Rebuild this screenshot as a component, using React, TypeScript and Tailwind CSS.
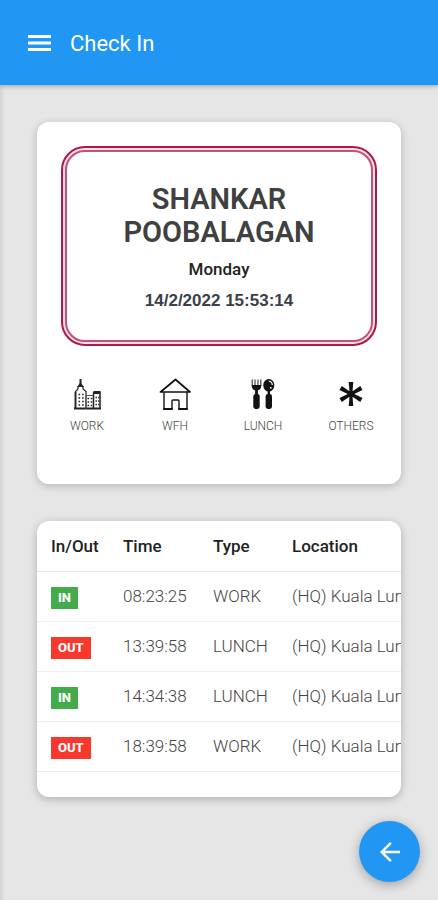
import { MdArrowBack } from 'react-icons/md'

const MenuIcon = () => (
  <svg className="h-[30px] w-[30px]" viewBox="0 0 30 30" fill="currentColor" aria-hidden="true">
    <path d="M4 7h23v3H4zM4 13.500h23v3H4zM4 20h23v3H4z" />
  </svg>
)

const WorkIcon = () => (
  <svg className="h-8 w-8" viewBox="0 0 32 32" fill="none" stroke="#222" aria-hidden="true">
    <path d="M9.500 1v7" strokeWidth="2" />
    <path d="M7 9l2.500-3.500L12 9" strokeWidth="1.500" />
    <path d="M4.500 31V13.500L7 11V8.500h5V11l3 2.500V31" strokeWidth="1.200" />
    <path d="M4.500 14v17M3 30.500h27" strokeWidth="1.800" />
    <path d="M15 17.500h7M15 31V17.500" stroke="#555" />
    <path d="M22.500 31V15l2-1h4.500v17" strokeWidth="1.500" />
    <path d="M22.500 14.500h6.500" strokeWidth="3" />
    <path d="M7.500 16.500h6M7.500 20h6M7.500 23.500h6M7.500 27h6" strokeWidth="1.600" strokeDasharray="1.600 2" />
    <path d="M16.500 20.500h5M16.500 24h5M16.500 27.500h5" strokeWidth="1.600" strokeDasharray="1.600 1.600" />
    <path d="M24.500 19.500h4M24.500 23h4M24.500 26.500h4" strokeWidth="1.600" strokeDasharray="1.400 1.200" />
  </svg>
)

const HomeIcon = () => (
  <svg className="h-8 w-8" viewBox="0 0 32 32" fill="none" stroke="#111" strokeLinejoin="round" strokeLinecap="round" aria-hidden="true">
    <path d="M1.500 14L16.500 1.500 31 14z" strokeWidth="1.700" />
    <path d="M5 14.500V31h8v-8q0-1 1-1h5q1 0 1 1v8h8V14.500" strokeWidth="1.400" />
    <path d="M5 31h8M20 31h8" strokeWidth="2" />
  </svg>
)

const LunchIcon = () => (
  <svg className="h-8 w-8" viewBox="0 0 32 32" fill="#111" aria-hidden="true">
    <path d="M5.200 1.500v6h8.600v-6M8 1.500v6M11 1.500v6" fill="none" stroke="#333" strokeWidth="1.100" />
    <path d="M4.700 7h9.600q0 4.500-3.400 5.500v4H8.100v-4Q4.700 11.500 4.700 7z" />
    <rect x="6.300" y="16" width="6.400" height="15" rx="2.400" />
    <ellipse cx="21.800" cy="7.200" rx="5.500" ry="6.300" />
    <path d="M20.600 12.500h2.400v6h-2.400z" />
    <rect x="18.600" y="16" width="6.400" height="15" rx="2.400" />
    <path d="M21.800 3q3.300.5 3.500 4" fill="none" stroke="#fff" strokeWidth="1.200" />
    <circle cx="23.800" cy="9.800" r=".9" fill="#fff" />
  </svg>
)

const OthersIcon = () => (
  <svg className="h-8 w-8" viewBox="0 0 32 32" fill="#111" aria-hidden="true">
    <path d="M13.700 4h4.600l-1 12h-2.600z" />
    <path d="M13.700 4h4.600l-1 12h-2.600z" transform="rotate(60 16 16)" />
    <path d="M13.700 4h4.600l-1 12h-2.600z" transform="rotate(120 16 16)" />
    <path d="M13.700 4h4.600l-1 12h-2.600z" transform="rotate(180 16 16)" />
    <path d="M13.700 4h4.600l-1 12h-2.600z" transform="rotate(240 16 16)" />
    <path d="M13.700 4h4.600l-1 12h-2.600z" transform="rotate(300 16 16)" />
    <circle cx="16" cy="16" r="3.200" />
  </svg>
)

const actions = [
  { label: 'WORK', Icon: WorkIcon },
  { label: 'WFH', Icon: HomeIcon },
  { label: 'LUNCH', Icon: LunchIcon },
  { label: 'OTHERS', Icon: OthersIcon },
]

const records = [
  { status: 'IN', time: '08:23:25', type: 'WORK', location: '(HQ) Kuala Lumpur' },
  { status: 'OUT', time: '13:39:58', type: 'LUNCH', location: '(HQ) Kuala Lumpur' },
  { status: 'IN', time: '14:34:38', type: 'LUNCH', location: '(HQ) Kuala Lumpur' },
  { status: 'OUT', time: '18:39:58', type: 'WORK', location: '(HQ) Kuala Lumpur' },
]

const Header = () => (
  <header className="flex h-[85px] items-center gap-4 bg-[#2196f3] px-6 pt-px text-white shadow-[0_1px_5px_rgba(0,0,0,0.3)]">
    <button type="button" aria-label="Menu">
      <MenuIcon />
    </button>
    <h1 className="text-[22px]">Check In</h1>
  </header>
)

const CheckInCard = () => (
  <section className="rounded-xl bg-white px-6 pt-6 pb-[50px] shadow-[0_2px_8px_rgba(0,0,0,0.22)]">
    <div className="rounded-3xl border-2 border-[#b01849] bg-[#f8dfe7] p-[2px]">
      <div className="rounded-[20px] border-2 border-[#c25377] bg-white px-8 pt-[31px] pb-[23px] text-center">
        <h2 className="text-[29px] leading-[33px] font-semibold text-[#404040]">SHANKAR POOBALAGAN</h2>
        <p className="mt-1 text-[17px] leading-8 font-medium text-[#222]">Monday</p>
        <p className="font-['Liberation_Sans',sans-serif] text-[17px] leading-8 font-bold text-[#3a3f4a]">14/2/2022 15:53:14</p>
      </div>
    </div>
    <div className="-mx-[18px] mt-8 grid grid-cols-4">
      {
      actions.map(({ label, Icon }) => (
        <button key={label} type="button" className="flex flex-col items-center gap-2 text-xs leading-4 font-light text-[#444]">
          <Icon />
          {label}
        </button>
      ))
    }
    </div>
  </section>
)

const Records = () => (
  <section className="overflow-hidden rounded-xl bg-white pb-[25px] shadow-[0_2px_8px_rgba(0,0,0,0.25)]">
    <table className="w-full table-fixed text-left text-[17px] whitespace-nowrap">
      <thead>
        <tr className="h-[50px] border-b border-[#e8e8e8] text-[#222]">
          <th className="w-[86px] pt-0.5 pl-[14px] font-medium">In/Out</th>
          <th className="w-[90px] pt-0.5 font-medium">Time</th>
          <th className="w-[79px] pt-0.5 font-medium">Type</th>
          <th className="pt-0.5 font-medium">Location</th>
        </tr>
      </thead>
      <tbody>
        {
        records.map(({ status, time, type, location }) => (
          <tr key={time} className="h-[50px] border-b border-[#eee] text-[#444]">
            <td className="pt-0.5 pl-[14px]">
              <span className={`inline-block px-[7px] align-middle text-[13px] leading-[22px] font-extrabold text-white ${status === 'IN' ? 'bg-[#43ab49]' : 'bg-[#f8382d]'}`}>
                {status}
              </span>
            </td>
            <td className="pt-0.5 font-light">{time}</td>
            <td className="pt-0.5 font-light">{type}</td>
            <td className="pt-0.5 font-light">{location}</td>
          </tr>
        ))
      }
      </tbody>
    </table>
  </section>
)

const App = () => (
  <div className="min-h-screen bg-[#e6e6e6] font-[Roboto,sans-serif]">
    <Header />
    <main className="flex flex-col gap-[37px] px-[37px] pt-[37px] pb-[104px] shadow-[inset_4px_0_4px_-2px_rgba(0,0,0,0.1)]">
      <CheckInCard />
      <Records />
    </main>
    <button
      type="button"
      aria-label="Back"
      className="fixed right-[18px] bottom-[18px] flex h-[61px] w-[61px] items-center justify-center rounded-full bg-[#2196f3] text-white shadow-[0_3px_12px_rgba(0,0,0,0.3)]"
    >
      <MdArrowBack className="h-[30px] w-[30px]" />
    </button>
  </div>
)

export default App
